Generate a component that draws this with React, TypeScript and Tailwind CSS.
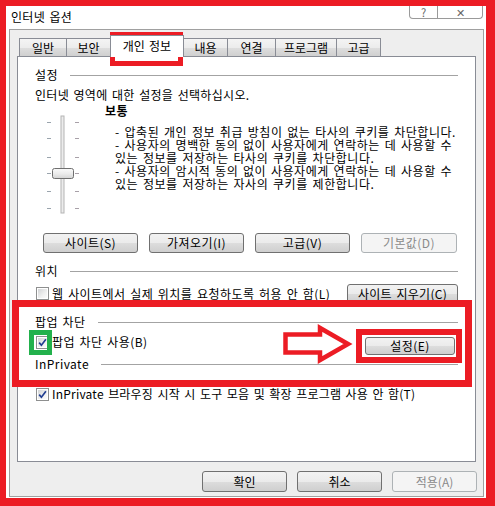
import React from "react";

const btnNormal =
  "flex items-center justify-center rounded-[3px] border border-[#707070] bg-[linear-gradient(to_bottom,#f2f2f2_0%,#ebebeb_50%,#dddddd_51%,#cfcfcf_100%)] text-black";
const btnDisabled =
  "flex items-center justify-center rounded-[3px] border border-[#adb2b5] bg-[#f4f4f4] text-[#8a8a8a]";

function Check({ checked }: { checked: boolean }) {
  return (
    <div className="w-[13px] h-[13px] shrink-0 border border-[#8e8f8f] bg-white p-px">
      <div className="w-full h-full bg-[linear-gradient(135deg,#d2d4d6_0%,#f0f0f0_60%,#fbfbfb_100%)] flex items-center justify-center">
        {checked && (
          <svg width="9" height="9" viewBox="0 0 9 9">
            <path d="M1.2 4.6 L3.4 7.2 L7.9 1.2" fill="none" stroke="#213e91" strokeWidth="1.7" />
          </svg>
        )}
      </div>
    </div>
  );
}

function Group({ title }: { title: string }) {
  return (
    <div className="flex items-center h-[18px]">
      <span>{title}</span>
      <div className="ml-[12px] flex-1 h-px bg-[#a3a3a3]" />
    </div>
  );
}

const tabCls =
  "h-[18px] -ml-px first:ml-0 border border-b-0 border-[#898c95] bg-[linear-gradient(to_bottom,#f4f4f4_0%,#ececec_50%,#dedede_51%,#d0d0d0_100%)] flex items-center justify-center";

function Slider() {
  const ticks = [18, 34, 53, 69, 87, 104];
  return (
    <svg width="70" height="118" viewBox="0 0 70 118">
      <defs>
        <linearGradient id="thumb" x1="0" y1="0" x2="0" y2="1">
          <stop offset="0" stopColor="#fafafa" />
          <stop offset="0.5" stopColor="#ececec" />
          <stop offset="1" stopColor="#d4d4d4" />
        </linearGradient>
      </defs>
      {ticks.map((t) => (
        <g key={t}>
          <line x1="12" x2="16" y1={t + 0.5} y2={t + 0.5} stroke="#9aa4ad" strokeWidth="1" />
          <line x1="40" x2="44" y1={t + 0.5} y2={t + 0.5} stroke="#a8a0a8" strokeWidth="1" />
        </g>
      ))}
      <rect x="26" y="12" width="3" height="97" fill="#ececec" stroke="#b4b4b4" strokeWidth="1" />
      <rect x="17.5" y="64.5" width="21" height="10" rx="2" fill="url(#thumb)" stroke="#6f6f6f" strokeWidth="1" />
    </svg>
  );
}

export default function App() {
  return (
    <div className="relative w-[495px] h-[506px] bg-white border-[#ec1c24] border-l-[6px] border-t-[6px] border-r-[9px] border-b-[8px] font-['Noto_Sans_CJK_KR','Noto_Sans',sans-serif] text-[12px] text-black [word-spacing:1.5px] leading-none">
      {/* Title bar */}
      <div className="h-[23px] flex items-center pl-[5px] pr-[3px] overflow-hidden">
        <span className="mt-[-1px] tracking-[0.3px]">인터넷 옵션</span>
        <div className="ml-auto self-start h-[13px] w-[74px] border border-t-0 border-[#9a9a9a] rounded-b-[4px] flex text-[#666] text-[11px] leading-[11px]">
          <div className="w-[28px] border-r border-[#9a9a9a] flex justify-center items-end">?</div>
          <div className="flex-1 flex justify-center items-end">✕</div>
        </div>
      </div>

      {/* Client area */}
      <div className="ml-[3px] mr-[2px] h-[468px] border border-[#a0a0a0] bg-[#eeeeee] flex flex-col">
        {/* Tabs */}
        <div className="h-[26px] flex items-end pl-[9px]">
          <div className={`${tabCls} w-[48px]`}>일반</div>
          <div className={`${tabCls} w-[45px]`}>보안</div>
          <div className="relative z-10 -ml-px h-[22px] -mb-px w-[74px] border border-b-0 border-[#898c95] bg-white flex items-center justify-center pb-[2px]">
            개인 정보
          </div>
          <div className={`${tabCls} w-[45px]`}>내용</div>
          <div className={`${tabCls} w-[49px]`}>연결</div>
          <div className={`${tabCls} w-[62px]`}>프로그램</div>
          <div className={`${tabCls} w-[45px]`}>고급</div>
        </div>

        {/* Panel */}
        <div className="ml-[7px] w-[459px] h-[406px] border border-[#898c95] bg-white pl-[17px] pr-[17px] pt-[9px] flex flex-col tracking-[0.45px]">
          <Group title="설정" />
          <div className="mt-[2px] h-[18px] flex items-center tracking-[0.3px]">인터넷 영역에 대한 설정을 선택하십시오.</div>

          <div className="flex h-[118px]">
            <div className="w-[70px] shrink-0">
              <Slider />
            </div>
            <div className="flex flex-col">
              <div className="h-[13px] leading-[13px] font-bold">보통</div>
              <div className="mt-[8px] pl-[10px] leading-[13px] tracking-[0.55px] whitespace-nowrap">
                <div>- 압축된 개인 정보 취급 방침이 없는 타사의 쿠키를 차단합니다.</div>
                <div>- 사용자의 명백한 동의 없이 사용자에게 연락하는 데 사용할 수</div>
                <div>있는 정보를 저장하는 타사의 쿠키를 차단합니다.</div>
                <div>- 사용자의 암시적 동의 없이 사용자에게 연락하는 데 사용할 수</div>
                <div>있는 정보를 저장하는 자사의 쿠키를 제한합니다.</div>
              </div>
            </div>
          </div>

          <div className="mt-[11px] ml-[8px] flex gap-[11px]">
            <div className={`${btnNormal} w-[95px] h-[20px]`}>사이트(S)</div>
            <div className={`${btnNormal} w-[95px] h-[20px]`}>가져오기(I)</div>
            <div className={`${btnNormal} w-[95px] h-[20px]`}>고급(V)</div>
            <div className={`${btnDisabled} w-[96px] h-[20px]`}>기본값(D)</div>
          </div>

          <div className="mt-[9px]">
            <Group title="위치" />
          </div>
          <div className="mt-[4px] h-[19px] flex items-center pl-px">
            <Check checked={false} />
            <span className="ml-[3px]">웹 사이트에서 실제 위치를 요청하도록 허용 안 함(L)</span>
            <div className={`${btnNormal} ml-auto w-[111px] h-[19px] tracking-[0.3px]`}>사이트 지우기(C)</div>
          </div>

          <div className="mt-[10px]">
            <Group title="팝업 차단" />
          </div>
          <div className="mt-[4px] h-[20px] flex items-start pl-px">
            <div className="flex items-center h-[14px]">
              <Check checked={true} />
              <span className="ml-[3px]">팝업 차단 사용(B)</span>
            </div>
            <div className={`${btnNormal} ml-auto mr-[3px] mt-[2px] w-[90px] h-[18px]`}>설정(E)</div>
          </div>

          <Group title="InPrivate" />
          <div className="mt-[14px] h-[14px] flex items-center pl-px">
            <Check checked={true} />
            <span className="ml-[3px] tracking-[0.2px]">InPrivate 브라우징 시작 시 도구 모음 및 확장 프로그램 사용 안 함(T)</span>
          </div>
        </div>

        {/* Bottom buttons */}
        <div className="mt-[9px] flex justify-end gap-[10px] pr-[6px]">
          <div className={`${btnNormal} w-[85px] h-[21px]`}>확인</div>
          <div className={`${btnNormal} w-[85px] h-[21px]`}>취소</div>
          <div className={`${btnDisabled} w-[85px] h-[21px]`}>적용(A)</div>
        </div>
      </div>

      {/* Annotation overlays */}
      <div className="pointer-events-none absolute -left-[6px] -top-[6px] w-[495px] h-[506px]">
        <div className="absolute left-[110px] top-[32px] w-[73px] h-[34px] border-[5px] border-[#ec1c24]" />
        <div className="absolute left-[12px] top-[300px] w-[460px] h-[87px] border-[7px] border-[#ec1c24]" />
        <div className="absolute left-[29px] top-[330px] w-[23px] h-[25px] border-[5px] border-[#22b14c]" />
        <div className="absolute left-[356px] top-[329px] w-[106px] h-[34px] border-[6px] border-[#ec1c24]" />
        <svg className="absolute left-[280px] top-[320px]" width="76" height="48" viewBox="0 0 76 48">
          <polygon
            points="5.5,14.5 40,14.5 40,8 68,24 40,40 40,32.5 5.5,32.5"
            fill="#ffffff"
            stroke="#ec1c24"
            strokeWidth="4.5"
            strokeLinejoin="miter"
          />
        </svg>
      </div>
    </div>
  );
}
